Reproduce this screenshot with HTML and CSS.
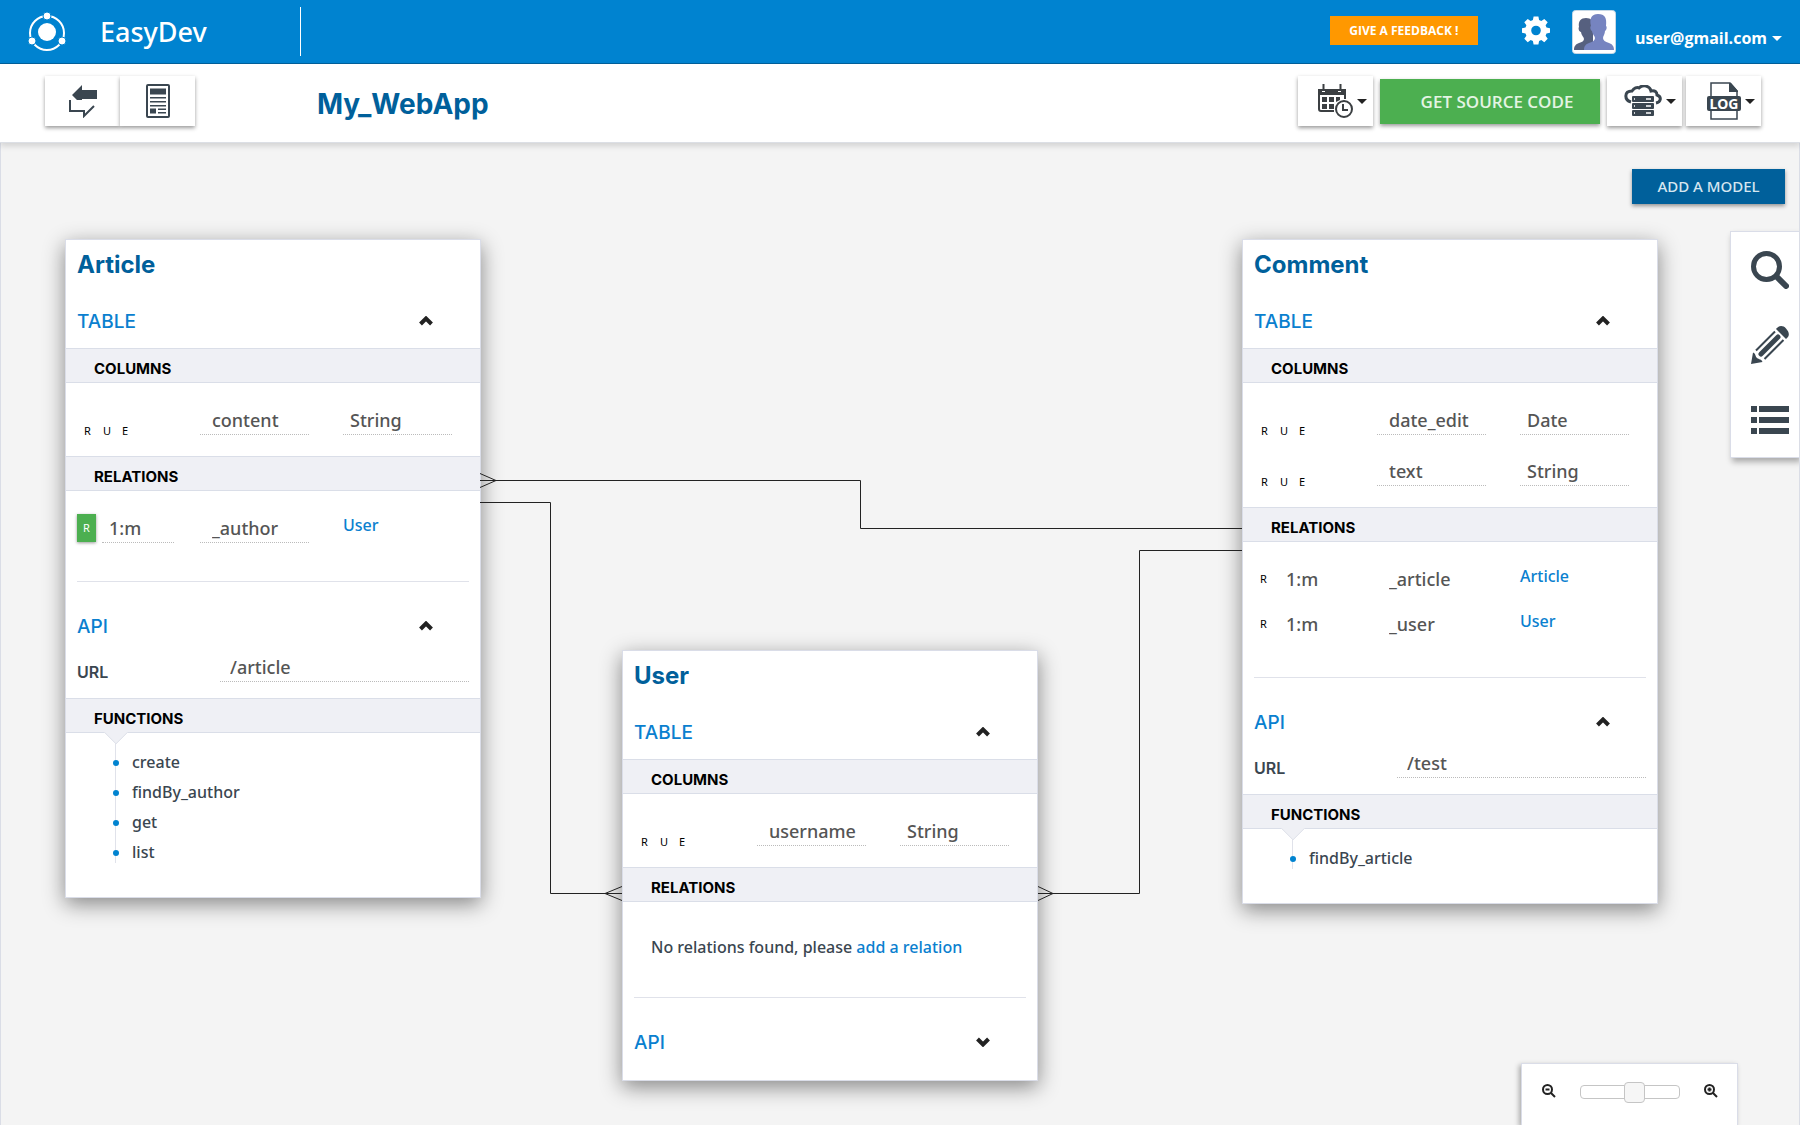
FILE: index.html
```html
<!DOCTYPE html>
<html lang="en">
<head>
    <meta charset="UTF-8">
    <meta name="viewport" content="width=device-width, initial-scale=1.0">
    <title>EasyDev - My_WebApp</title>
    <link rel="stylesheet" href="styles.css">
</head>
<body>
    <header class="topbar">
        <a href="#" class="brand">
            <svg class="logo" viewBox="0 0 38 40" aria-hidden="true">
                <circle cx="19" cy="21" r="17" fill="none" stroke="#fff" stroke-width="2"/>
                <circle cx="19" cy="20" r="9" fill="#fff"/>
                <g fill="#fff" stroke="#0083d0" stroke-width="1">
                    <circle cx="19" cy="4" r="4"/>
                    <circle cx="4" cy="29" r="4"/>
                    <circle cx="34" cy="29" r="4"/>
                </g>
            </svg>
            <span>EasyDev</span>
        </a>
        <div class="topbar-right">
            <button type="button" class="feedback">GIVE A FEEDBACK !</button>
            <button type="button" class="settings" aria-label="Settings">
                <svg viewBox="0 0 28 28" aria-hidden="true">
                    <path fill="#fff" fill-rule="evenodd" d="M11.6 0h4.8l.7 3.6 2.2.9 3-2.1 3.4 3.4-2.1 3 .9 2.2 3.5.7v4.6l-3.5.8-.9 2.2 2.1 3-3.4 3.4-3-2.1-2.2.9-.7 3.5h-4.8l-.7-3.5-2.2-.9-3 2.1-3.4-3.4 2.1-3-.9-2.2L0 16.300v-4.600l3.500-.7.9-2.200-2.100-3L5.700 2.400l3 2.100 2.200-.9zM14 9.200a4.800 4.800 0 1 0 0 9.600 4.800 4.800 0 0 0 0-9.600z"/>
                </svg>
            </button>
            <svg class="avatar" viewBox="0 0 44 44" aria-hidden="true">
                <rect x=".5" y=".5" width="43" height="43" rx="3" fill="#fff" stroke="#c5d8e6"/>
                <path fill="#56607f" d="M2 40c0-4 2-6 5-7 3-1 5-2 5-4 0-2-3-4-3-7-2 0-3-4-2-5-1-6 2-9 7-9 5 0 8 3 7 9v23z"/>
                <path fill="#7684c0" d="M12 40c0-4 2-6 5-7 4-1 6-3 6-5 0-2-3-4-3-7-2-1-2-5-1-5-2-8 1-12 7-12 7 0 9 4 8 12 1 0 1 4-1 5 0 3-2 5-2 7 0 2 2 4 6 5 3 1 5 3 5 7z"/>
            </svg>
            <button type="button" class="account">user@gmail.com <span class="caret"></span></button>
        </div>
    </header>

    <div class="toolbar">
        <div class="toolbar-left">
            <button type="button" class="tool" aria-label="Switch view">
                <svg width="30" height="34" viewBox="0 0 30 34" aria-hidden="true">
                    <path fill="#3a4650" d="M4 11 14 1v5h15v9H14v1h-5z"/>
                    <path fill="none" stroke="#3a4650" stroke-width="2" d="M2 16v11h14v5l10-10"/>
                </svg>
            </button>
            <button type="button" class="tool" aria-label="Documentation">
                <svg width="24" height="34" viewBox="0 0 24 34" aria-hidden="true">
                    <rect x="1" y="1" width="22" height="32" rx="1" fill="#fff" stroke="#3a4650" stroke-width="2"/>
                    <path fill="#3a4650" d="M4 4.500h16v6H4zM4 13h16v1.500H4zM4 17h16v1.500H4zM4 21h16v1.500H4zM4 24.500h6v5H4zM12 24.500h8v1.500h-8zM12 28h8v1.500h-8z"/>
                </svg>
            </button>
        </div>
        <h1 class="app-name">My_WebApp</h1>
        <div class="toolbar-right">
            <button type="button" class="tool tool-menu" aria-label="Schedule">
                <svg width="36" height="34" viewBox="0 0 36 34" aria-hidden="true">
                    <path fill="none" stroke="#3b3f42" stroke-width="2" d="M28 15V6H2v19q0 2 2 2h13"/>
                    <path fill="#3b3f42" d="M1 5h4v3h3V5h13v3h3V5h5v6H1zM5 13h5v5H5zM12 13h5v5h-5zM19 13h4v3l-4 2zM5 20h5v5H5zM12 20h5v5h-5z"/>
                    <path stroke="#3b3f42" stroke-width="2" d="M6.500 0v7M23.500 0v7"/>
                    <circle cx="27" cy="25" r="8" fill="#fff" stroke="#3b3f42" stroke-width="2"/>
                    <path fill="none" stroke="#3b3f42" stroke-width="2" d="M26 20v6h5"/>
                </svg>
                <span class="caret"></span>
            </button>
            <button type="button" class="source">GET SOURCE CODE</button>
            <button type="button" class="tool tool-menu" aria-label="Deploy">
                <svg width="38" height="32" viewBox="0 0 38 32" aria-hidden="true">
                    <path fill="none" stroke="#3a4650" stroke-width="3" d="M7 17C0 15 0 6 8 6c2-3 5-4 7-3 4-4 11-2 12 3 4-1 6 1 6 4 5 2 4 7-1 8"/>
                    <g fill="#3a4650">
                        <rect x="8" y="11" width="22" height="6" rx="1"/>
                        <rect x="8" y="18" width="22" height="6" rx="1"/>
                        <rect x="8" y="25" width="22" height="6" rx="1"/>
                    </g>
                    <path stroke="#fff" stroke-width="1.500" d="M22 14h5M22 21h5M22 28h5M10 14h1M10 21h1M10 28h1"/>
                </svg>
                <span class="caret"></span>
            </button>
            <button type="button" class="tool tool-menu" aria-label="Logs">
                <svg width="34" height="38" viewBox="0 0 34 38" aria-hidden="true">
                    <path fill="#fff" stroke="#3a4650" stroke-width="1.500" d="M4 1h19l7 8v28H4z"/>
                    <path fill="#3a4650" d="M22 1h2l7 8v1h-9z"/>
                    <rect x="0" y="14" width="34" height="15" rx="2" fill="#3a4650"/>
                    <text class="log-text" x="17" y="27" text-anchor="middle">LOG</text>
                </svg>
                <span class="caret"></span>
            </button>
        </div>
    </div>

    <main class="canvas">
        <div class="canvas-actions">
            <button type="button" class="add-model">ADD A MODEL</button>
        </div>

        <!-- links between the models -->
        <svg class="wires" width="1800" height="982" aria-hidden="true">
            <path d="M480 337.500H860.500V385.500H1242M480 330.500L496 337.500L480 344.500"/>
            <path d="M480 359.500H550.500V750.500H622M622 743.500L605 750.500L622 757.500"/>
            <path d="M1242 407.500H1139.500V750.500H1038M1038 743.500L1053 750.500L1038 757.500"/>
        </svg>

        <section class="model model-article">
            <h2>Article</h2>
            <button type="button" class="section-head">TABLE <svg class="chevron" viewBox="0 0 14 10"><path d="M1.500 8 7 2.500 12.500 8"/></svg></button>
            <h3 class="band">COLUMNS</h3>
            <div class="rows">
                <div class="row">
                    <div class="flags"><span>R</span><span>U</span><span>E</span></div>
                    <input type="text" class="field" aria-label="Column name" value="content">
                    <input type="text" class="field type" aria-label="Column type" value="String">
                </div>
            </div>
            <h3 class="band">RELATIONS</h3>
            <div class="rows relations">
                <div class="row">
                    <div class="kind">
                        <span class="flag active">R</span>
                        <input type="text" class="field card" aria-label="Cardinality" value="1:m">
                    </div>
                    <input type="text" class="field" aria-label="Relation name" value="_author">
                    <a href="#">User</a>
                </div>
            </div>
            <hr>
            <button type="button" class="section-head api">API <svg class="chevron" viewBox="0 0 14 10"><path d="M1.500 8 7 2.500 12.500 8"/></svg></button>
            <div class="url">
                <label for="articleUrl">URL</label>
                <input type="text" class="field" id="articleUrl" value="/article">
            </div>
            <h3 class="band functions-band">FUNCTIONS</h3>
            <ul class="functions">
                <li>create</li>
                <li>findBy_author</li>
                <li>get</li>
                <li>list</li>
            </ul>
        </section>

        <section class="model model-user">
            <h2>User</h2>
            <button type="button" class="section-head">TABLE <svg class="chevron" viewBox="0 0 14 10"><path d="M1.500 8 7 2.500 12.500 8"/></svg></button>
            <h3 class="band">COLUMNS</h3>
            <div class="rows">
                <div class="row">
                    <div class="flags"><span>R</span><span>U</span><span>E</span></div>
                    <input type="text" class="field" aria-label="Column name" value="username">
                    <input type="text" class="field type" aria-label="Column type" value="String">
                </div>
            </div>
            <h3 class="band">RELATIONS</h3>
            <p class="empty">No relations found, please <a href="#">add a relation</a></p>
            <hr>
            <button type="button" class="section-head api closed">API <svg class="chevron" viewBox="0 0 14 10"><path d="M1.500 2 7 7.500 12.500 2"/></svg></button>
        </section>

        <section class="model model-comment">
            <h2>Comment</h2>
            <button type="button" class="section-head">TABLE <svg class="chevron" viewBox="0 0 14 10"><path d="M1.500 8 7 2.500 12.500 8"/></svg></button>
            <h3 class="band">COLUMNS</h3>
            <div class="rows">
                <div class="row">
                    <div class="flags"><span>R</span><span>U</span><span>E</span></div>
                    <input type="text" class="field" aria-label="Column name" value="date_edit">
                    <input type="text" class="field type" aria-label="Column type" value="Date">
                </div>
                <div class="row">
                    <div class="flags"><span>R</span><span>U</span><span>E</span></div>
                    <input type="text" class="field" aria-label="Column name" value="text">
                    <input type="text" class="field type" aria-label="Column type" value="String">
                </div>
            </div>
            <h3 class="band">RELATIONS</h3>
            <div class="rows relations plain">
                <div class="row">
                    <div class="kind">
                        <span class="flag">R</span>
                        <input type="text" class="field card" aria-label="Cardinality" value="1:m">
                    </div>
                    <input type="text" class="field" aria-label="Relation name" value="_article">
                    <a href="#">Article</a>
                </div>
                <div class="row">
                    <div class="kind">
                        <span class="flag">R</span>
                        <input type="text" class="field card" aria-label="Cardinality" value="1:m">
                    </div>
                    <input type="text" class="field" aria-label="Relation name" value="_user">
                    <a href="#">User</a>
                </div>
            </div>
            <hr>
            <button type="button" class="section-head api">API <svg class="chevron" viewBox="0 0 14 10"><path d="M1.500 8 7 2.500 12.500 8"/></svg></button>
            <div class="url">
                <label for="commentUrl">URL</label>
                <input type="text" class="field" id="commentUrl" value="/test">
            </div>
            <h3 class="band functions-band">FUNCTIONS</h3>
            <ul class="functions">
                <li>findBy_article</li>
            </ul>
        </section>

        <nav class="side-tools" aria-label="Tools">
            <button type="button" aria-label="Search">
                <svg viewBox="0 0 38 38"><circle cx="15.500" cy="15.500" r="13" fill="none" stroke="#3a4650" stroke-width="5"/><path stroke="#3a4650" stroke-width="6" stroke-linecap="round" d="M26 26l9 9"/></svg>
            </button>
            <button type="button" aria-label="Edit">
                <svg viewBox="0 0 38 38">
                    <path fill="#3a4650" d="M25 3C28-.8 32-.8 35 2.500s4.500 7 0 10.500zM2 26.500C5 27.500 4 30 6 32c2 1.500 4.500 1 5.500 4L0 38z"/>
                    <path stroke="#3a4650" stroke-width="2" d="M5 24.500 24 5.500M13.500 33 32.500 14"/>
                    <path stroke="#3a4650" stroke-width="5" stroke-linecap="round" d="M10 28 27 11"/>
                </svg>
            </button>
            <button type="button" aria-label="List">
                <svg viewBox="0 0 38 38"><path fill="#3a4650" d="M0 5h6v6H0zM8 5h30v6H8zM0 16h6v6H0zM8 16h30v6H8zM0 27h6v6H0zM8 27h30v6H8z"/></svg>
            </button>
        </nav>

        <div class="zoom">
            <svg viewBox="0 0 14 14" aria-hidden="true"><circle cx="5.500" cy="5.500" r="4.500"/><path d="M9 9l4 4M3.500 5.500h4"/></svg>
            <input type="range" min="0" max="100" value="56" aria-label="Zoom">
            <svg viewBox="0 0 14 14" aria-hidden="true"><circle cx="5.500" cy="5.500" r="4.500"/><path d="M9 9l4 4M3.500 5.500h4M5.500 3.500v4"/></svg>
        </div>
    </main>
</body>
</html>
```

FILE: styles.css
```css
* {
    box-sizing: border-box;
}

body {
    margin: 0;
    min-height: 100vh;
    display: flex;
    flex-direction: column;
    font-family: "Noto Sans", "Open Sans", sans-serif;
    font-size: 16px;
    font-weight: 500;
    color: #3a4650;
    background-color: #fff;
}

button {
    border: none;
    padding: 0;
    background: none;
    font: inherit;
    cursor: pointer;
}

a {
    color: #0a80cf;
    text-decoration: none;
}

svg {
    display: block;
    flex-shrink: 0;
}

/* Top bar */
.topbar {
    height: 64px;
    display: flex;
    justify-content: space-between;
    background-color: #0083d0;
    border-bottom: 1px solid #00609b;
    padding-right: 18px;
}

.brand {
    width: 301px;
    height: 49px;
    margin-top: 7px;
    padding-left: 28px;
    display: flex;
    align-items: center;
    gap: 34px;
    border-right: 1px solid #fff;
    color: #fff;
    font-size: 27px;
}

.logo {
    width: 38px;
    height: 40px;
}

.topbar-right {
    display: flex;
    align-items: flex-start;
    padding-top: 10px;
}

.feedback {
    width: 148px;
    height: 29px;
    margin-top: 6px;
    background-color: #ff9800;
    color: #fff;
    font-family: "Open Sans", sans-serif;
    font-size: 12px;
    font-weight: 700;
}

.settings {
    margin: 6px 22px 0 44px;
}

.settings svg {
    width: 28px;
    height: 29px;
}

.avatar {
    width: 44px;
    height: 44px;
}

.account {
    display: flex;
    align-items: center;
    gap: 5px;
    height: 28px;
    margin: 14px 0 0 19px;
    color: #fff;
    font-family: "Open Sans", sans-serif;
    font-weight: 700;
}

.caret {
    border: 5px solid transparent;
    border-top-color: currentColor;
    border-bottom: none;
}

/* Toolbar */
.toolbar {
    height: 79px;
    display: flex;
    align-items: flex-start;
    padding: 12px 39px 0 45px;
    border-bottom: 1px solid #dcdfe5;
    box-shadow: 0 3px 6px rgba(0, 0, 0, 0.14);
    position: relative;
    z-index: 1;
}

.toolbar-left {
    display: flex;
}

.tool {
    width: 75px;
    height: 50px;
    display: flex;
    align-items: center;
    justify-content: center;
    background-color: #fff;
    color: #222;
    box-shadow: 0 2px 4px rgba(0, 0, 0, 0.4);
}

.tool-menu {
    justify-content: flex-end;
    gap: 4px;
    padding-right: 6px;
}

.app-name {
    margin: 0 0 0 122px;
    font-family: Inter, sans-serif;
    font-size: 28px;
    font-weight: 700;
    line-height: 56px;
    color: #00609b;
}

.toolbar-right {
    display: flex;
    margin-left: auto;
    gap: 4px;
}

.source {
    width: 220px;
    height: 45px;
    margin: 3px 3px 0;
    padding-left: 14px;
    background-color: #4caf50;
    color: #e4f4e4;
    font-family: "Open Sans", sans-serif;
    font-size: 17px;
    font-weight: 600;
    box-shadow: 0 2px 4px rgba(0, 0, 0, 0.4);
}

.log-text {
    font-size: 14px;
    font-weight: 700;
    fill: #fff;
}

/* Canvas */
.canvas {
    flex: 1;
    position: relative;
    overflow: hidden;
    background-color: #f4f4f4;
    border: solid #dadde6;
    border-width: 0 1px;
}

.canvas-actions {
    display: flex;
    justify-content: flex-end;
    padding: 26px 14px 0 0;
}

.add-model {
    width: 153px;
    height: 35px;
    padding-bottom: 2px;
    background-color: #00609b;
    color: #d5e6f0;
    font-size: 15px;
    box-shadow: 0 2px 4px rgba(0, 0, 0, 0.4);
}

.wires {
    position: absolute;
    top: 0;
    left: -1px;
    z-index: 1;
    fill: none;
    stroke: #222;
    stroke-width: 1;
    pointer-events: none;
}

/* Model cards, placed freely on the canvas */
.model {
    position: absolute;
    width: 416px;
    background-color: #fff;
    border: 1px solid #dadde8;
    box-shadow: 0 6px 20px rgba(0, 0, 0, 0.45);
}

.model-article {
    left: 64px;
    top: 96px;
}

.model-user {
    left: 621px;
    top: 507px;
}

.model-comment {
    left: 1241px;
    top: 96px;
}

.model h2 {
    height: 48px;
    margin: 0;
    padding-left: 11px;
    font-family: Inter, sans-serif;
    font-size: 24px;
    font-weight: 700;
    line-height: 50px;
    color: #00609b;
}

.section-head {
    width: 100%;
    height: 30px;
    margin: 18px 0 12px;
    padding: 0 47px 0 11px;
    display: flex;
    align-items: center;
    justify-content: space-between;
    font-family: Inter, sans-serif;
    font-size: 19px;
    color: #0a80cf;
}

.section-head.api {
    margin: 29px 0 11px;
}

.section-head.closed {
    margin-bottom: 23px;
}

.chevron {
    width: 14px;
    height: 10px;
    fill: none;
    stroke: #222;
    stroke-width: 4;
}

.band {
    margin: 0;
    height: 35px;
    padding: 4px 0 0 28px;
    background-color: #eff0f5;
    border: solid #dadee8;
    border-width: 1px 0;
    font-family: Inter, sans-serif;
    font-size: 15px;
    font-weight: 700;
    line-height: 32px;
    color: #000;
}

.rows {
    padding-top: 22px;
}

.row {
    display: grid;
    grid-template-columns: 89px 109px 109px;
    column-gap: 34px;
    height: 51px;
    align-items: start;
    padding-left: 11px;
}

.flags {
    display: flex;
    gap: 12px;
    padding: 18px 0 0 7px;
    font-size: 11px;
    font-weight: 400;
    color: #000;
}

.flags span {
    width: 7px;
}

.field {
    width: 100%;
    height: 30px;
    padding: 0 0 0 12px;
    border: none;
    border-bottom: 1px dotted #bbb;
    background: none;
    font: inherit;
    font-size: 18px;
    color: #555;
    outline: none;
}

.type,
.card {
    padding-left: 7px;
}

.relations {
    padding-bottom: 23px;
}

.relations .row {
    height: 45px;
}

.kind {
    display: flex;
    align-items: center;
    gap: 6px;
    margin-right: -8px;
}

.relations a {
    line-height: 24px;
}

.flag {
    flex: none;
    width: 19px;
    font-size: 11px;
    font-weight: 400;
    line-height: 28px;
    text-align: center;
    color: #000;
}

.flag.active {
    background-color: #4caf50;
    color: #fff;
    box-shadow: 0 1px 3px rgba(0, 0, 0, 0.4);
}

.plain .field {
    border-bottom-color: transparent;
}

.model hr {
    margin: 0 11px;
    border: none;
    border-top: 1px solid #e0e2ea;
}

.empty {
    margin: 0;
    padding: 33px 0 38px 28px;
    line-height: 24px;
}

.url {
    display: flex;
    align-items: flex-end;
    padding: 0 11px 16px;
}

.url label {
    width: 143px;
    flex: none;
    font-family: Inter, sans-serif;
    font-weight: 600;
    line-height: 20px;
}

.url .field {
    padding-left: 10px;
}

.functions-band {
    position: relative;
}

/* arrow under the band */
.functions-band::after {
    content: "";
    position: absolute;
    left: 41px;
    bottom: -9px;
    width: 17px;
    height: 17px;
    background-color: #eff0f5;
    border: solid #e0e2ea;
    border-width: 0 1px 1px 0;
    transform: rotate(45deg);
    clip-path: polygon(100% 0, 100% 100%, 0 100%);
}

.functions {
    list-style: none;
    margin: 0;
    padding: 14px 0 30px 49px;
}

.functions li {
    position: relative;
    padding-left: 17px;
    line-height: 30px;
}

/* vertical line, starts at the arrow */
.functions li::after {
    content: "";
    position: absolute;
    left: 0;
    top: -4px;
    width: 1px;
    height: 30px;
    background-color: #e0e2ea;
}

/* bullet over the vertical line */
.functions li::before {
    content: "";
    position: absolute;
    z-index: 1;
    left: -2px;
    top: 13px;
    width: 6px;
    height: 6px;
    border-radius: 50%;
    background-color: #0083d0;
}

/* Side tools */
.side-tools {
    position: absolute;
    top: 88px;
    right: 0;
    display: flex;
    flex-direction: column;
    gap: 37px;
    padding: 19px 10px 18px 20px;
    background-color: #fff;
    border: 1px solid #dadde8;
    border-right: none;
    box-shadow: 2px 4px 6px rgba(0, 0, 0, 0.3);
}

.side-tools svg {
    width: 38px;
    height: 38px;
}

/* Zoom panel */
.zoom {
    position: absolute;
    right: 61px;
    bottom: 0;
    height: 62px;
    display: flex;
    align-items: flex-start;
    gap: 24px;
    padding: 17px 19px 0 20px;
    background-color: #fff;
    border: 1px solid #dadde8;
    border-bottom: none;
    box-shadow: -2px 2px 5px rgba(0, 0, 0, 0.3);
}

.zoom svg {
    width: 14px;
    height: 14px;
    margin-top: 3px;
    fill: none;
    stroke: #222;
    stroke-width: 2;
}

.zoom input {
    -webkit-appearance: none;
    appearance: none;
    width: 100px;
    height: 14px;
    margin: 4px 0 0;
    border: 1px solid #c5c5c5;
    border-radius: 4px;
    background-color: #fff;
}

.zoom input::-webkit-slider-thumb {
    -webkit-appearance: none;
    appearance: none;
    width: 21px;
    height: 21px;
    border: 1px solid #c5c5c5;
    border-radius: 4px;
    background-color: #f6f6f6;
}
```
